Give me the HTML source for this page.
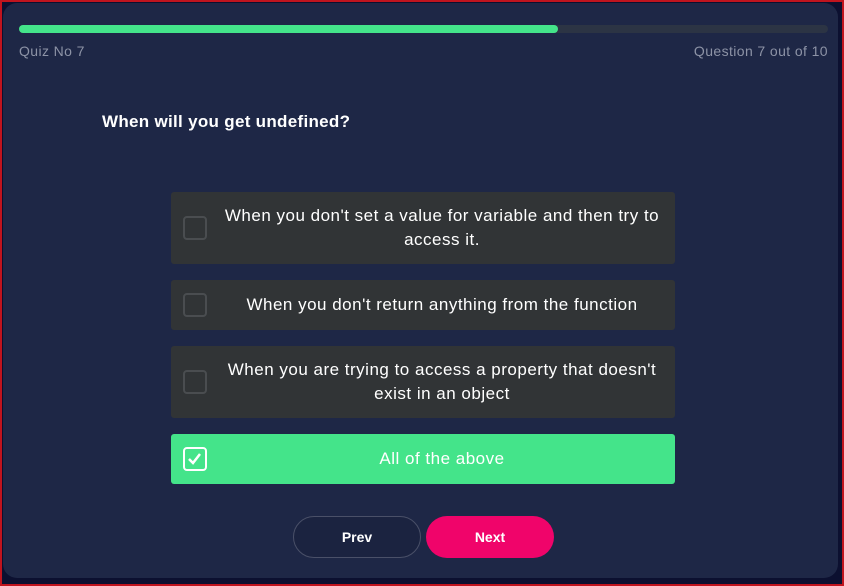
<!DOCTYPE html>
<html><head><meta charset="utf-8"><style>
*{box-sizing:border-box;margin:0;padding:0}
html,body{width:844px;height:586px;overflow:hidden}
body{background:#0c1030;position:relative;font-family:"Liberation Sans",sans-serif}
.frame{position:absolute;left:0;top:0;width:844px;height:586px;border:2px solid #c0141e}
.card{position:absolute;left:3px;top:3px;width:835px;height:575px;background:#1e2746;border-radius:14px}
.bar{position:absolute;left:19px;top:25px;width:809px;height:8px;border-radius:4px;background:#2c3444}
.fill{position:absolute;left:0;top:0;width:539px;height:8px;border-radius:4px;background:#44e48a}
.meta{position:absolute;top:43px;font-size:14px;color:#8d93a6;letter-spacing:0.4px}
.q{position:absolute;left:102px;top:112px;font-size:17px;font-weight:bold;color:#fff;letter-spacing:0.3px}
.opt{position:absolute;left:171px;width:504px;background:#313436;border-radius:3px;color:#fff;font-size:17px;letter-spacing:0.5px;text-align:center;display:flex;align-items:center;justify-content:center;line-height:24px;padding:0 12px 0 50px}
.cb{position:absolute;left:12px;top:50%;margin-top:-12px;width:24px;height:24px;border:2px solid #4a4d50;border-radius:4px}
.sel{background:#44e48a}
.sel .cb{border:2.5px solid #fff}
.btn{position:absolute;top:516px;width:128px;height:42px;border-radius:21px;color:#fff;font-size:14px;font-weight:bold;display:flex;align-items:center;justify-content:center}
</style></head><body>
<div class="frame"></div>
<div class="card"></div>
<div class="bar"><div class="fill"></div></div>
<div class="meta" style="left:19px">Quiz No 7</div>
<div class="meta" style="right:16px">Question 7 out of 10</div>
<div class="q">When will you get undefined?</div>
<div class="opt" style="top:192px;height:72px"><div class="cb"></div>When you don't set a value for variable and then try to access it.</div>
<div class="opt" style="top:280px;height:50px"><div class="cb"></div>When you don't return anything from the function</div>
<div class="opt" style="top:346px;height:72px"><div class="cb"></div>When you are trying to access a property that doesn't exist in an object</div>
<div class="opt sel" style="top:434px;height:50px"><div class="cb"><svg width="19" height="19" viewBox="0 0 19 19" style="position:absolute;left:0;top:0"><path d="M4 10 L8 14 L15 5" stroke="#fff" stroke-width="2.5" fill="none"/></svg></div>All of the above</div>
<div class="btn" style="left:293px;border:1px solid #4a5068;background:#1b2340">Prev</div>
<div class="btn" style="left:426px;background:#f0046a">Next</div>
</body></html>
